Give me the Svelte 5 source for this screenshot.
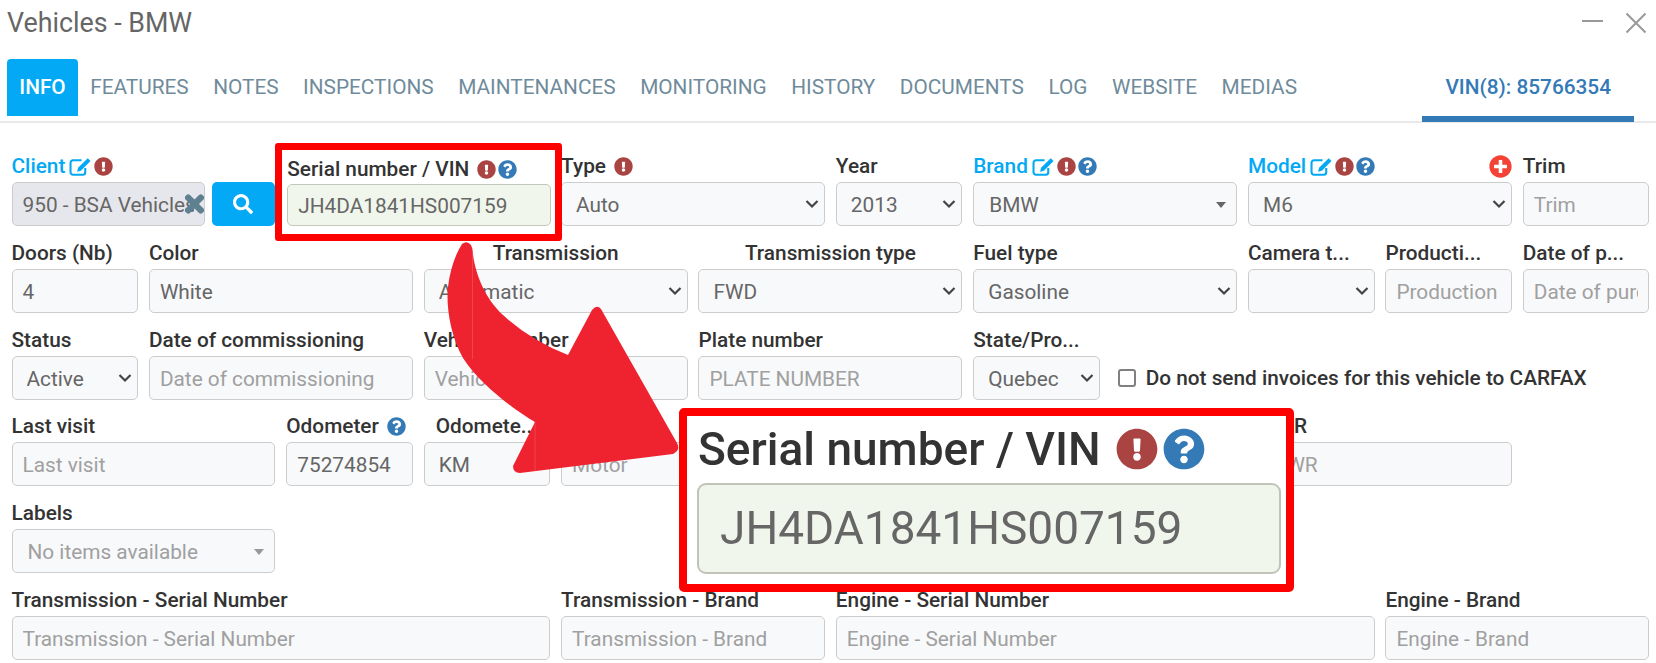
<script>
  const tabs = ['Info', 'Features', 'Notes', 'Inspections', 'Maintenances', 'Monitoring', 'History', 'Documents', 'Log', 'Website', 'Medias'];

  const paths = {
    warn: 'M504 256c0 136.997-111.043 248-248 248S8 392.997 8 256C8 119.083 119.043 8 256 8s248 111.083 248 248zm-248 50c-25.405 0-46 20.595-46 46s20.595 46 46 46 46-20.595 46-46-20.595-46-46-46zm-43.673-165.346l7.418 136c.347 6.364 5.609 11.346 11.982 11.346h48.546c6.373 0 11.635-4.982 11.982-11.346l7.418-136c.375-6.874-5.098-12.654-11.982-12.654h-63.383c-6.884 0-12.356 5.78-11.981 12.654z',
    help: 'M504 256c0 136.997-111.043 248-248 248S8 392.997 8 256C8 119.083 119.043 8 256 8s248 111.083 248 248zM262.655 90c-54.497 0-89.255 22.957-116.549 63.758-3.536 5.286-2.353 12.415 2.715 16.258l34.699 26.31c5.205 3.947 12.621 3.008 16.665-2.122 17.864-22.658 30.113-35.797 57.303-35.797 20.429 0 45.698 13.148 45.698 32.958 0 14.976-12.363 22.667-32.534 33.976C247.128 238.528 216 254.941 216 296v4c0 6.627 5.373 12 12 12h56c6.627 0 12-5.373 12-12v-1.333c0-28.462 83.186-29.647 83.186-106.667 0-58.002-60.165-102-116.531-102zM256 338c-25.365 0-46 20.635-46 46 0 25.364 20.635 46 46 46s46-20.636 46-46c0-25.365-20.635-46-46-46z',
    plus: 'M256 8C119 8 8 119 8 256s111 248 248 248 248-111 248-248S393 8 256 8zm144 276c0 6.6-5.4 12-12 12h-92v92c0 6.6-5.4 12-12 12h-56c-6.6 0-12-5.4-12-12v-92h-92c-6.6 0-12-5.4-12-12v-56c0-6.6 5.4-12 12-12h92v-92c0-6.6 5.4-12 12-12h56c6.6 0 12 5.4 12 12v92h92c6.6 0 12 5.4 12 12v56z',
    search: 'M505 442.7L405.3 343c-4.5-4.5-10.6-7-17-7H372c27.6-35.3 44-79.7 44-128C416 93.1 322.9 0 208 0S0 93.1 0 208s93.1 208 208 208c48.3 0 92.7-16.4 128-44v16.3c0 6.4 2.5 12.5 7 17l99.7 99.7c9.4 9.4 24.6 9.4 33.9 0l28.3-28.3c9.4-9.4 9.4-24.6.1-34zM208 336c-70.7 0-128-57.2-128-128 0-70.7 57.2-128 128-128 70.7 0 128 57.2 128 128 0 70.7-57.2 128-128 128z'
  };

  const fields = [
    { label: 'Type', span: 2, kind: 'select', value: 'Auto', icons: ['warn'] },
    { label: 'Year', span: 1, kind: 'select', value: '2013' },
    { label: 'Brand', span: 2, kind: 'combo', value: 'BMW', link: true, icons: ['edit', 'warn', 'help'] },
    { label: 'Model', span: 2, kind: 'select', value: 'M6', link: true, icons: ['edit', 'warn', 'help'], add: true },
    { label: 'Trim', span: 1, ph: 'Trim' },

    { label: 'Doors (Nb)', span: 1, value: '4' },
    { label: 'Color', span: 2, value: 'White' },
    { label: 'Transmission', span: 2, kind: 'select', value: 'Automatic', center: true },
    { label: 'Transmission type', span: 2, kind: 'select', value: 'FWD', center: true },
    { label: 'Fuel type', span: 2, kind: 'select', value: 'Gasoline' },
    { label: 'Camera t...', span: 1, kind: 'select', value: '' },
    { label: 'Producti...', span: 1, ph: 'Production date' },
    { label: 'Date of p...', span: 1, ph: 'Date of purchase' },

    { label: 'Status', span: 1, kind: 'select', value: 'Active' },
    { label: 'Date of commissioning', span: 2, ph: 'Date of commissioning' },
    { label: 'Vehicle number', span: 2, ph: 'Vehicle number' },
    { label: 'Plate number', span: 2, ph: 'PLATE NUMBER' },
    { label: 'State/Pro...', span: 1, kind: 'select', value: 'Quebec' },
    { kind: 'check', span: 4, label: 'Do not send invoices for this vehicle to CARFAX' },

    { label: 'Last visit', span: 2, ph: 'Last visit' },
    { label: 'Odometer', span: 1, value: '75274854', icons: ['help'] },
    { label: 'Odomete...', span: 1, kind: 'select', value: 'KM', inset: true },
    { label: 'Motor', span: 2, ph: 'Motor' },
    { skip: true, span: 3 },
    { label: 'GVWR', span: 2, ph: 'GVWR' },
    { skip: true, span: 1 },

    { label: 'Labels', span: 2, kind: 'combo', value: 'No items available', muted: true },
    { skip: true, span: 10 },

    { label: 'Transmission - Serial Number', span: 4, ph: 'Transmission - Serial Number' },
    { label: 'Transmission - Brand', span: 2, ph: 'Transmission - Brand' },
    { label: 'Engine - Serial Number', span: 4, ph: 'Engine - Serial Number' },
    { label: 'Engine - Brand', span: 2, ph: 'Engine - Brand' }
  ];
</script>

{#snippet icon(name)}
  {#if name === 'edit'}
    <svg class="ico edit" viewBox="0 0 24 20" aria-hidden="true">
      <path d="M17 11.500V16a2.600 2.600 0 0 1-2.600 2.600H4.100A2.600 2.600 0 0 1 1.500 16V6a2.600 2.600 0 0 1 2.600-2.600h9" fill="none" stroke="currentColor" stroke-width="2.200" />
      <path d="M19.600 1.200l3 3L12.400 14.400l-4 1 1-4z" fill="currentColor" />
    </svg>
  {:else}
    <svg class="ico {name}" viewBox="0 0 512 512" aria-hidden="true"><path d={paths[name]} fill="currentColor" /></svg>
  {/if}
{/snippet}

{#snippet serialLabel()}
  <span class="label-text">Serial number / VIN</span>
  {@render icon('warn')}
  {@render icon('help')}
{/snippet}

<div class="page">
  <header class="title-bar">
    <h1>Vehicles - BMW</h1>
    <div class="window-btns">
      <svg width="22" height="22" viewBox="0 0 22 22"><path d="M0 9h21" stroke="#999" stroke-width="2" /></svg>
      <svg width="22" height="22" viewBox="0 0 22 22"><path d="M1.500 1.500l19 19M20.500 1.500l-19 19" stroke="#999" stroke-width="2" /></svg>
    </div>
  </header>

  <nav class="tabs">
    {#each tabs as tab, i}
      <span class="tab" class:active={i === 0}>{tab}</span>
    {/each}
    <span class="tab vin">VIN(8): 85766354</span>
  </nav>

  <form class="grid">
    <div class="field client">
      <div class="label link"><span class="label-text">Client</span>{@render icon('edit')}{@render icon('warn')}</div>
      <div class="client-row">
        <div class="client-input">
          <input class="ctl locked" value="950 - BSA Vehicles" readonly />
          <svg class="clear" viewBox="0 0 352 512" aria-hidden="true"><path fill="currentColor" stroke="currentColor" stroke-width="30" d="M242.72 256l100.07-100.07c12.28-12.28 12.28-32.19 0-44.48l-22.24-22.24c-12.28-12.28-32.19-12.28-44.48 0L176 189.28 75.930 89.210c-12.280-12.280-32.190-12.280-44.480 0L9.210 111.450c-12.280 12.280-12.280 32.190 0 44.480L109.280 256 9.210 356.070c-12.280 12.280-12.280 32.190 0 44.480l22.240 22.240c12.280 12.280 32.200 12.280 44.480 0L176 322.720l100.070 100.070c12.280 12.280 32.200 12.280 44.480 0l22.240-22.240c12.280-12.280 12.280-32.190 0-44.480L242.720 256z" /></svg>
        </div>
        <button type="button" class="search-btn"><svg viewBox="0 0 512 512" aria-hidden="true"><path fill="#fff" d={paths.search} /></svg></button>
      </div>
    </div>

    <div class="field serial">
      <div class="label">{@render serialLabel()}</div>
      <input class="ctl vin-input" value="JH4DA1841HS007159" readonly />
    </div>

    {#each fields as f}
      {#if f.skip}
        <div style="grid-column: span {f.span}"></div>
      {:else if f.kind === 'check'}
        <label class="check" style="grid-column: span {f.span}">
          <input type="checkbox" />
          <span>{f.label}</span>
        </label>
      {:else}
        <div class="field" style="grid-column: span {f.span}">
          <div class="label" class:link={f.link} class:center={f.center} class:inset={f.inset}>
            <span class="label-text">{f.label}</span>
            {#each f.icons ?? [] as name}{@render icon(name)}{/each}
            {#if f.add}<span class="add">{@render icon('plus')}</span>{/if}
          </div>
          {#if f.kind === 'select'}
            <select class="ctl"><option>{f.value}</option></select>
          {:else if f.kind === 'combo'}
            <div class="ctl combo" class:muted={f.muted}>
              <span>{f.value}</span>
              <i class="caret"></i>
            </div>
          {:else}
            <input class="ctl" value={f.value ?? ''} placeholder={f.ph} readonly />
          {/if}
        </div>
      {/if}
    {/each}
  </form>

  <div class="mark-box"></div>

  <svg class="arrow" width="240" height="240" viewBox="440 240 240 240" aria-hidden="true">
    <path d="M462 244Q467 240 471 245Q473 249 473 254C475 273 485 299 503 315Q530 340 568 355L592 310Q597 304 601 309L677 443Q681 450 673 454L520 473Q513 473 513 466L535 422C515 410 480 385 463 358C450 335 446 305 448 287C450 270 455 255 462 244Z" fill="#ef2330" />
    <path d="M472.500 253V359M535 422V471" stroke="#f1525c" stroke-width="0.700" fill="none" />
  </svg>

  <div class="callout">
    <div class="label">{@render serialLabel()}</div>
    <div class="big-input"><span>JH4DA1841HS007159</span></div>
  </div>
</div>

<style>
  :global(body) {
    margin: 0;
    background: #fff;
    font-family: Roboto, "Liberation Sans", sans-serif;
  }

  .page {
    position: relative;
    width: 1656px;
    height: 663px;
    overflow: hidden;
    font-size: 20.800px;
    color: #333;
  }

  .title-bar {
    display: flex;
    justify-content: space-between;
    align-items: center;
    height: 46px;
    padding: 0 9px 0 7px;
    margin-bottom: 13px;
  }

  h1 {
    margin: 0;
    font-size: 26.800px;
    font-weight: 400;
    color: #666;
  }

  .window-btns {
    display: flex;
    gap: 21px;
  }

  .tabs {
    display: flex;
    height: 64px;
    padding-left: 7px;
    border-bottom: 2px solid #e9e9e9;
    box-sizing: border-box;
    align-items: flex-start;
  }

  .tab {
    height: 57px;
    line-height: 57px;
    padding: 0 12.250px;
    text-transform: uppercase;
    color: #6f8b9b;
  }

  .tab.active {
    background: #03a9f4;
    color: #fff;
    font-weight: 500;
    border-radius: 4px 4px 0 0;
  }

  .tab.vin {
    margin-left: auto;
    margin-right: 22px;
    padding: 0 23px;
    height: 63px;
    box-sizing: border-box;
    color: #337ab7;
    font-weight: 500;
    border-bottom: 6px solid #337ab7;
    text-transform: none;
  }

  .grid {
    display: grid;
    grid-template-columns: repeat(12, 126.600px);
    column-gap: 10.800px;
    row-gap: 13.800px;
    padding: 30px 0 0 11.500px;
  }

  .field {
    min-width: 0;
  }

  .client,
  .serial {
    grid-column: span 2;
  }

  .label {
    display: flex;
    align-items: center;
    gap: 2px;
    height: 26px;
    margin-bottom: 3px;
    font-weight: 500;
    white-space: nowrap;
  }

  .label-text {
    min-width: 0;
  }

  .label-text + .ico {
    margin-left: 6px;
  }

  .label.link {
    color: #03a9f4;
  }

  .label.center {
    justify-content: center;
  }

  .label.inset {
    padding-left: 12px;
  }

  .ico {
    flex: none;
    width: 19px;
    height: 19px;
  }

  .ico.warn {
    color: #a94442;
  }

  .ico.help {
    color: #337ab7;
  }

  .label-text + .ico.edit {
    width: 23px;
    color: #03a9f4;
    margin-left: 2px;
  }

  .add {
    margin-left: auto;
    display: flex;
  }

  .ico.plus {
    width: 23px;
    height: 23px;
    color: #f44336;
  }

  .ctl {
    display: block;
    box-sizing: border-box;
    width: 100%;
    height: 44px;
    padding: 2px 10px 0;
    background-color: #f8f9fb;
    border: 1.500px solid #ccc;
    border-radius: 5px;
    font: 400 20.800px Roboto, "Liberation Sans", sans-serif;
    color: #666;
    outline: none;
  }

  .ctl::placeholder {
    color: #a0a0a0;
    opacity: 1;
  }

  select.ctl {
    appearance: none;
    padding: 2px 24px 0 14px;
    background-image: url("data:image/svg+xml,%3Csvg xmlns='http://www.w3.org/2000/svg' width='14' height='10' viewBox='0 0 14 10'%3E%3Cpath d='M1.500 2l5.500 5.500L12.500 2' fill='none' stroke='%23444' stroke-width='2.200'/%3E%3C/svg%3E");
    background-repeat: no-repeat;
    background-position: right 5px center;
  }

  .locked {
    background: #e6e7ec;
  }

  .client-row {
    display: flex;
    gap: 7px;
  }

  .client-input {
    position: relative;
    flex: 0 0 193px;
  }

  .clear {
    position: absolute;
    right: 1px;
    top: 9px;
    width: 19px;
    height: 26px;
    color: #5f8090;
  }

  .search-btn {
    flex: 1;
    height: 44px;
    border: none;
    border-radius: 5px;
    background: #03a9f4;
    padding: 0;
  }

  .search-btn svg {
    width: 20px;
    height: 20px;
    display: block;
    margin: 0 auto;
  }

  .serial {
    margin: 0 -1px 0 1px;
  }

  .serial .label {
    margin-top: 3px;
    margin-bottom: 2px;
  }

  .serial .label-text {
    margin-right: 0;
  }

  .vin-input {
    height: 42px;
    background: #f1f6ec;
    border-color: #c4c8bc;
  }

  .combo {
    display: flex;
    align-items: center;
    justify-content: space-between;
    padding: 2px 10px 0 15px;
  }

  .combo.muted {
    color: #a0a0a0;
  }

  .caret {
    border-left: 5.500px solid transparent;
    border-right: 5.500px solid transparent;
    border-top: 6px solid #666;
  }

  .combo.muted .caret {
    border-top-color: #999;
  }

  .check {
    display: flex;
    align-items: center;
    gap: 10px;
    align-self: end;
    height: 44px;
    margin-left: 7px;
    font-weight: 500;
    white-space: nowrap;
  }

  .check input {
    width: 18px;
    height: 18px;
    margin: 0;
    appearance: none;
    border: 2px solid #808080;
    border-radius: 3px;
    background: #fff;
  }

  .mark-box {
    position: absolute;
    left: 275px;
    top: 143px;
    width: 287px;
    height: 98px;
    box-sizing: border-box;
    border: 7px solid #f00;
    border-radius: 3px;
  }

  .arrow {
    position: absolute;
    left: 440px;
    top: 240px;
  }

  .callout {
    position: absolute;
    left: 679px;
    top: 408px;
    width: 615px;
    height: 184px;
    box-sizing: border-box;
    padding: 7px 5px 0 10px;
    background: #fff;
    border: 8px solid #f00;
    border-radius: 5px;
  }

  /* the callout is an enlarged crop, so its text reads a little soft */
  .callout .label {
    height: 52px;
    margin: 0 0 8px 1px;
    font-size: 46px;
    gap: 5px;
    filter: blur(0.6px);
  }

  .callout .label-text {
    margin-right: 10px;
  }

  .callout .ico {
    width: 42px;
    height: 42px;
    margin-left: 0;
  }

  .big-input {
    height: 91px;
    line-height: 87px;
    box-sizing: border-box;
    padding-left: 21px;
    background: #f1f6ec;
    border: 2px solid #c0c4b8;
    border-radius: 9px;
    font-size: 46px;
    color: #666;
  }

  .big-input span {
    display: inline-block;
    filter: blur(0.6px);
  }
</style>
